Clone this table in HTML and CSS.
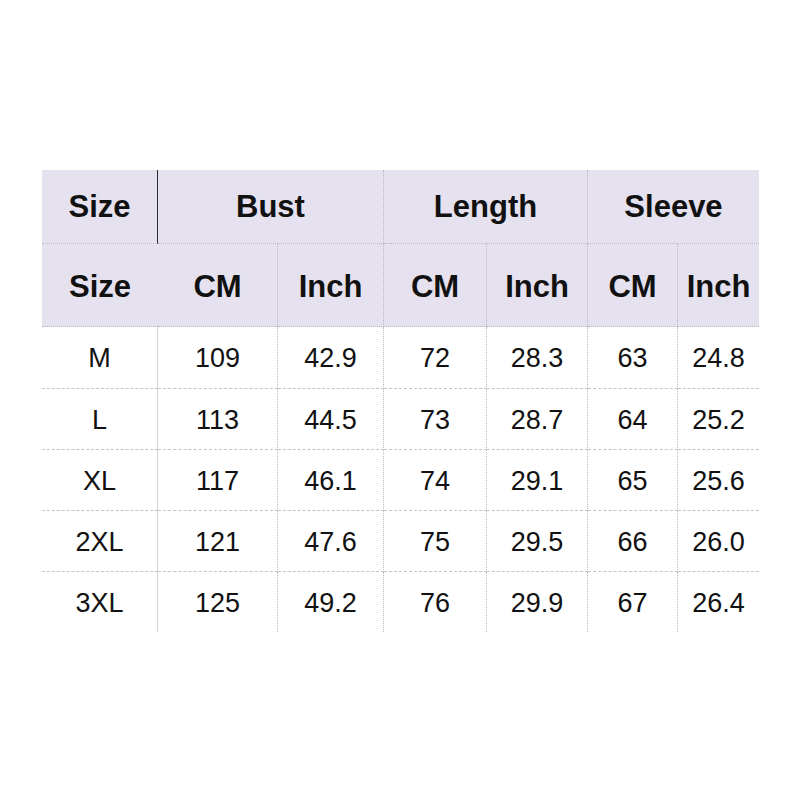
FILE: index.html
```html
<!DOCTYPE html>
<html>
<head>
<meta charset="utf-8">
<link rel="stylesheet" href="styles.css">
</head>
<body>
<div class="page">
  <div class="chart">
    <div class="cell head h1 c-size solid">Size</div>
    <div class="cell head h1 span2">Bust</div>
    <div class="cell head h1 span2">Length</div>
    <div class="cell head h1 span2 last">Sleeve</div>

    <div class="cell head h2 noright">Size</div>
    <div class="cell head h2">CM</div>
    <div class="cell head h2">Inch</div>
    <div class="cell head h2">CM</div>
    <div class="cell head h2">Inch</div>
    <div class="cell head h2">CM</div>
    <div class="cell head h2 last">Inch</div>

    <div class="cell data first-col">M</div><div class="cell data">109</div><div class="cell data">42.9</div><div class="cell data">72</div><div class="cell data">28.3</div><div class="cell data">63</div><div class="cell data last">24.8</div>
    <div class="cell data first-col">L</div><div class="cell data">113</div><div class="cell data">44.5</div><div class="cell data">73</div><div class="cell data">28.7</div><div class="cell data">64</div><div class="cell data last">25.2</div>
    <div class="cell data first-col">XL</div><div class="cell data">117</div><div class="cell data">46.1</div><div class="cell data">74</div><div class="cell data">29.1</div><div class="cell data">65</div><div class="cell data last">25.6</div>
    <div class="cell data first-col">2XL</div><div class="cell data">121</div><div class="cell data">47.6</div><div class="cell data">75</div><div class="cell data">29.5</div><div class="cell data">66</div><div class="cell data last">26.0</div>
    <div class="cell data first-col bottom">3XL</div><div class="cell data bottom">125</div><div class="cell data bottom">49.2</div><div class="cell data bottom">76</div><div class="cell data bottom">29.9</div><div class="cell data bottom">67</div><div class="cell data last bottom">26.4</div>
  </div>
</div>
</body>
</html>
```

FILE: styles.css
```css
html, body {
  margin: 0;
  padding: 0;
  background: #ffffff;
}

.page {
  width: 800px;
  height: 800px;
  padding: 170px 0 0 42px;
  box-sizing: border-box;
}

.chart {
  display: grid;
  grid-template-columns: 116px 120px 106px 103px 101px 90px 81px;
  grid-template-rows: 74px 83px 62px 61px 61px 61px 60px;
  font-family: "Liberation Sans", Arial, sans-serif;
  color: #111111;
}

.cell {
  box-sizing: border-box;
  display: flex;
  align-items: center;
  justify-content: center;
  border-right: 1px dotted #b9b6c2;
  border-bottom: 1px dotted #b9b6c2;
}

.head {
  background: #e5e1ee;
  font-weight: bold;
  font-size: 31px;
}

.h2 {
  padding-top: 4px;
}

.span2 {
  grid-column: span 2;
}

.solid {
  border-right: 1px solid #2a2a2a;
}

.noright {
  border-right: none;
}

.last {
  border-right: none;
}

.data {
  font-size: 27px;
  padding-top: 2px;
  border-bottom: 1px dashed #c4c4c4;
  border-right: 1px dotted #bdbdbd;
}

.first-col {
  border-right: 1px solid #d2d2d2;
}

.data.last {
  border-right: none;
}

.bottom {
  border-bottom: none;
}
```
